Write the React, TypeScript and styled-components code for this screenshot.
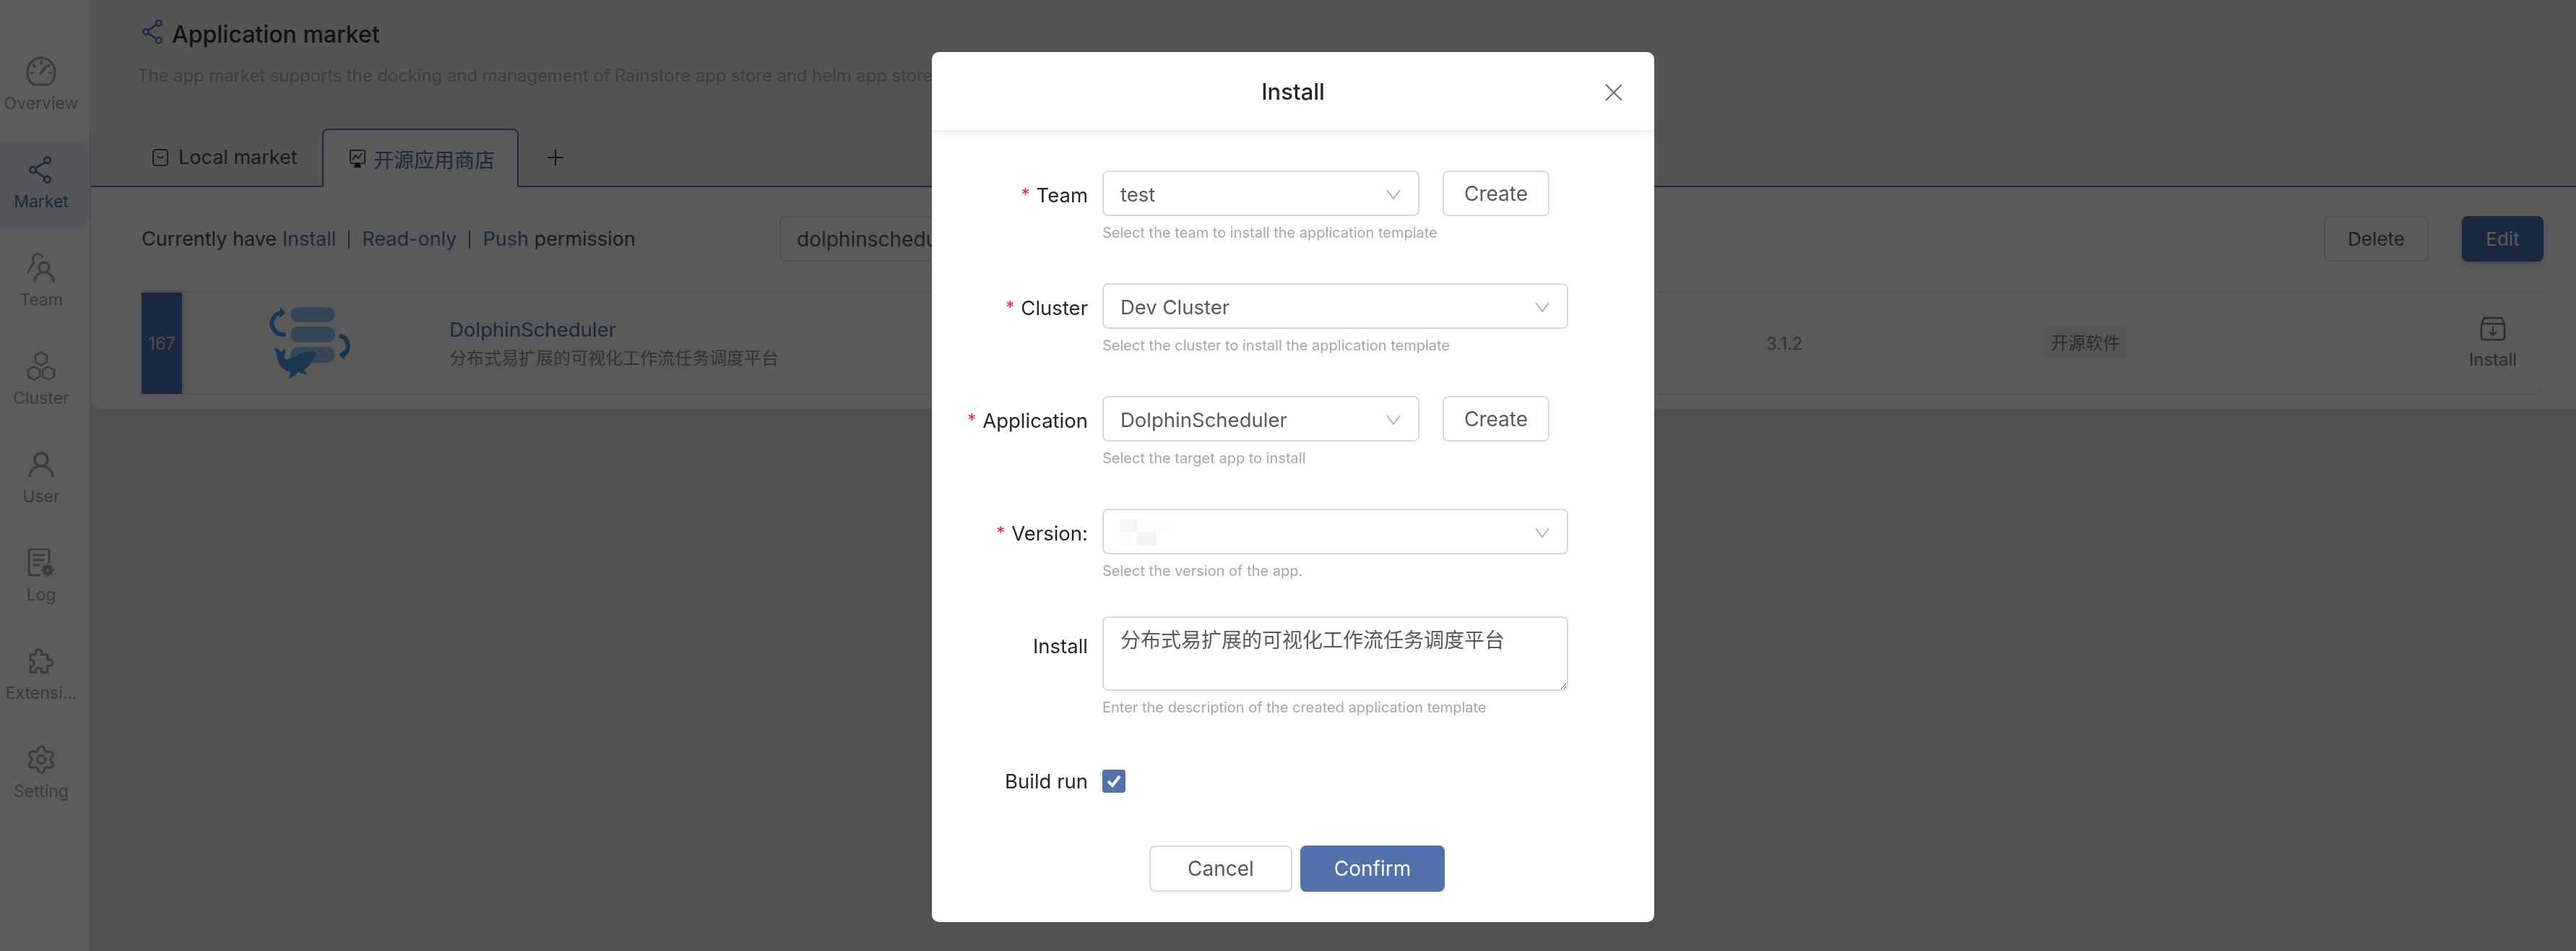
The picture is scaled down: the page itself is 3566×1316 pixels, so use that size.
import { ReactNode } from 'react';
import styled, { createGlobalStyle } from 'styled-components';
import { Settings } from 'lucide-react';

const FONT = `Inter, "Noto Sans CJK SC", "Noto Sans", sans-serif`;
const PRIMARY = '#4d73b1';

const GlobalStyle = createGlobalStyle`
	html, body {
		margin: 0;
		padding: 0;
		background: #dfe1e4;
		font-family: ${FONT};
	}
	* {
		box-sizing: border-box;
	}
`;

const Page = styled.div`
	display: flex;
	width: 3566px;
	height: 1316px;
	overflow: hidden;
	background: #dfe1e4;
`;

const Sidebar = styled.nav`
	display: flex;
	flex-direction: column;
	gap: 16px;
	flex: 0 0 124px;
	padding-top: 60px;
	background: #ffffff;
	box-shadow: 2px 0 6px rgba(0, 0, 0, 0.08);
`;

const NavItem = styled.div<{ $active?: boolean }>`
	display: flex;
	flex-direction: column;
	align-items: center;
	gap: 4px;
	height: 120px;
	padding: 15px 10px 0 0;
	border-radius: 0 16px 16px 0;
	background: ${(p) => (p.$active ? '#e9edf5' : 'transparent')};
	color: ${(p) => (p.$active ? PRIMARY : '#a3a3a3')};
`;

const NavIcon = styled.div`
	display: flex;
	align-items: center;
	justify-content: center;
	width: 48px;
	height: 48px;
	color: inherit;
`;

const NavLabel = styled.span`
	display: block;
	font-size: 23px;
	line-height: 32px;
	white-space: nowrap;
`;

const Main = styled.main`
	flex: 1;
	min-width: 0;
	display: flex;
	flex-direction: column;
`;

const Header = styled.header`
	height: 178px;
	padding: 26px 0 0 66px;
	background: #e8e9ec;
`;

const TitleRow = styled.div`
	display: flex;
	align-items: center;
	gap: 9px;
	height: 36px;
	margin-left: 5px;
	color: ${PRIMARY};
`;

const Title = styled.h1`
	margin: 8px 0 0;
	color: #333333;
	font-size: 32px;
	font-weight: 500;
	line-height: 36px;
`;

const Description = styled.p`
	margin: 27px 0 0;
	color: #a9a9a9;
	font-size: 24px;
	letter-spacing: -0.1px;
	line-height: 32px;
	white-space: nowrap;
`;

const TabBar = styled.div`
	display: flex;
	height: 81px;
	border-bottom: 2px solid ${PRIMARY};
	margin-left: 2px;
	background: #e8e9ec;
`;

const LocalTab = styled.div`
	display: flex;
	align-items: center;
	gap: 14px;
	width: 320px;
	padding-left: 85px;
	color: #4a4a4a;
	font-size: 27px;
`;

const ActiveTab = styled.div`
	display: flex;
	align-items: center;
	gap: 11px;
	width: 272px;
	height: 81px;
	padding-left: 36px;
	border: 2px solid ${PRIMARY};
	border-bottom: none;
	border-radius: 8px 8px 0 0;
	background: #f8f8f8;
	color: ${PRIMARY};
	font-size: 28px;
`;

const AddTab = styled.div`
	display: flex;
	align-items: center;
	margin-left: 39px;
	color: #333333;
`;

const Panel = styled.section`
	margin-left: 2px;
	padding: 40px 45px 20px 70px;
	border-radius: 0 0 0 16px;
	background: #f8f8f8;
`;

const Toolbar = styled.div`
	display: grid;
	grid-template-columns: 883px 560px 1fr auto auto;
	align-items: center;
	height: 63px;
	margin-bottom: 41px;
`;

const Permission = styled.div`
	display: flex;
	align-items: center;
	color: #4a4a4a;
	font-size: 27px;
	white-space: nowrap;
`;

const PermissionLink = styled.span`
	color: ${PRIMARY};
`;

const PermissionSep = styled.span`
	width: 2px;
	height: 26px;
	margin: 0 17px;
	background: ${PRIMARY};
`;

const SearchBox = styled.div`
	display: flex;
	align-items: center;
	height: 63px;
	padding-left: 22px;
	border: 2px solid #dedede;
	border-radius: 8px;
	color: #595959;
	font-size: 28px;
`;

const ToolbarButton = styled.div<{ $primary?: boolean }>`
	display: flex;
	align-items: center;
	justify-content: center;
	width: ${(p) => (p.$primary ? '113px' : '145px')};
	height: 63px;
	margin-left: ${(p) => (p.$primary ? '46px' : '0')};
	border: 2px solid ${(p) => (p.$primary ? PRIMARY : '#dedede')};
	border-radius: 8px;
	background: ${(p) => (p.$primary ? PRIMARY : 'transparent')};
	box-shadow: ${(p) => (p.$primary ? '0 4px 8px rgba(0, 0, 0, 0.15)' : 'none')};
	color: ${(p) => (p.$primary ? '#ffffff' : '#595959')};
	font-size: 26px;
`;

const AppCard = styled.article`
	display: grid;
	grid-template-columns: 54px 370px 1823px 384px 1fr 100px;
	align-items: center;
	height: 143px;
	padding-right: 18px;
	border: 2px solid #eaeaea;
	border-radius: 8px;
`;

const CountBlock = styled.div`
	display: flex;
	align-items: center;
	justify-content: center;
	width: 56px;
	height: 140px;
	margin-left: -2px;
	background: ${PRIMARY};
	box-shadow: 2px 0 6px rgba(0, 0, 0, 0.2);
	color: #d6d6d6;
	font-size: 24px;
`;

const LogoCell = styled.div`
	display: flex;
	align-items: center;
	height: 120px;
	margin-left: 120px;
	border-left: 1px solid #f0f0f0;
`;

const AppInfo = styled.div`
	display: flex;
	flex-direction: column;
	gap: 6px;
`;

const AppName = styled.span`
	color: ${PRIMARY};
	font-size: 27.5px;
	line-height: 36px;
`;

const AppDesc = styled.span`
	color: #8d8d8d;
	font-size: 24px;
	line-height: 32px;
`;

const Version = styled.span`
	color: #8d8d8d;
	font-size: 24px;
`;

const Tag = styled.span`
	justify-self: start;
	padding: 6px 10px;
	background: #efefef;
	color: #7a7a7a;
	font-size: 24px;
	line-height: 32px;
`;

const InstallAction = styled.div`
	display: flex;
	flex-direction: column;
	align-items: center;
	gap: 11px;
	color: #7a7a7a;
	font-size: 24px;
`;

const Overlay = styled.div`
	position: fixed;
	inset: 0;
	display: flex;
	align-items: flex-start;
	padding: 72px 0 0 1290px;
	background: rgba(0, 0, 0, 0.64);
`;

const Modal = styled.div`
	width: 1000px;
	height: 1204px;
	border-radius: 10px;
	background: #ffffff;
	overflow: hidden;
`;

const ModalHeader = styled.div`
	position: relative;
	display: flex;
	align-items: center;
	justify-content: center;
	height: 108px;
	box-shadow: 0 2px 8px rgba(0, 0, 0, 0.12);
	color: #262626;
	font-size: 31px;
	font-weight: 500;
`;

const CloseButton = styled.div`
	position: absolute;
	top: 44px;
	right: 44px;
	display: flex;
	color: #6f6f6f;
`;

const Form = styled.div`
	display: flex;
	flex-direction: column;
	gap: 55px;
	padding-top: 56px;
`;

const Row = styled.div<{ $pull?: number }>`
	display: grid;
	grid-template-columns: 216px 1fr;
	column-gap: 20px;
	margin-top: ${(p) => p.$pull ?? 0}px;
`;

const Label = styled.label<{ $offset?: number }>`
	display: flex;
	align-items: center;
	justify-content: flex-end;
	gap: 9px;
	height: 63px;
	margin-top: ${(p) => p.$offset ?? 2}px;
	color: #262626;
	font-size: 27.5px;
	white-space: nowrap;
`;

const Required = styled.span`
	color: #f5222d;
	font-size: 24px;
`;

const Control = styled.div`
	display: flex;
	align-items: center;
	gap: 32px;
`;

const Select = styled.div<{ $wide?: boolean }>`
	display: flex;
	align-items: center;
	justify-content: space-between;
	width: ${(p) => (p.$wide ? '645px' : '439px')};
	height: 63px;
	padding: 2px 24px 0 23px;
	border: 2px solid #d9d9d9;
	border-radius: 8px;
	color: #595959;
	font-size: 27.5px;
`;

const CreateButton = styled.div`
	display: flex;
	align-items: center;
	justify-content: center;
	width: 148px;
	height: 63px;
	border: 2px solid #d9d9d9;
	border-radius: 8px;
	box-shadow: 0 3px 0 rgba(0, 0, 0, 0.015);
	color: #595959;
	font-size: 28px;
`;

const Help = styled.div`
	margin-top: 8px;
	color: #a6a6a6;
	font-size: 20px;
	line-height: 30px;
`;

const TextArea = styled.textarea`
	display: block;
	width: 645px;
	height: 103px;
	padding: 14px 23px 6px;
	border: 2px solid #d9d9d9;
	border-radius: 8px;
	outline: none;
	color: #595959;
	font-family: ${FONT};
	font-size: 28px;
	line-height: 34px;
`;

const CheckCell = styled.div`
	display: flex;
	align-items: center;
	height: 63px;
`;

const Checkbox = styled.div`
	display: flex;
	align-items: center;
	justify-content: center;
	width: 32px;
	height: 32px;
	border-radius: 4px;
	background: #5371ab;
`;

const Footer = styled.div`
	display: flex;
	gap: 11px;
	margin-top: 58px;
	padding-left: 301px;
`;

const FooterButton = styled.div<{ $primary?: boolean }>`
	display: flex;
	align-items: center;
	justify-content: center;
	width: ${(p) => (p.$primary ? '200px' : '198px')};
	height: 64px;
	border: 2px solid ${(p) => (p.$primary ? '#5371ab' : '#d9d9d9')};
	border-radius: 8px;
	background: ${(p) => (p.$primary ? '#5371ab' : '#ffffff')};
	box-shadow: 0 3px 0 rgba(0, 0, 0, 0.03);
	color: ${(p) => (p.$primary ? '#ffffff' : '#595959')};
	font-size: 28px;
`;

function ShareIcon({ size = 36 }: { size?: number }): JSX.Element {
	return (
		<svg width={size} height={size} viewBox="0 0 36 40" fill="none" stroke="currentColor" strokeWidth="3">
			<circle cx="27" cy="6" r="4.5" />
			<circle cx="6" cy="20" r="4.5" />
			<circle cx="27" cy="34" r="4.5" />
			<path d="M10 17.5 L23 9 M10 22.5 L23 31" />
		</svg>
	);
}

function GaugeIcon(): JSX.Element {
	return (
		<svg width="42" height="42" viewBox="0 0 42 42" fill="none" stroke="currentColor" strokeWidth="3">
			<path d="M10 39 C4 35 2 28 2 22 C2 11 10 2 21 2 C32 2 40 11 40 22 C40 28 38 35 32 39 Z" strokeLinejoin="round" />
			<path d="M20 24 L27 15" strokeWidth="3.5" strokeLinecap="round" />
			<path d="M21 7 V10 M10 12 L12 14 M32 12 L30 14 M7 23 H10 M32 23 H35" strokeLinecap="round" />
		</svg>
	);
}

function TeamIcon(): JSX.Element {
	return (
		<svg width="38" height="42" viewBox="0 0 38 42" fill="none" stroke="currentColor" strokeWidth="3" strokeLinecap="round">
			<circle cx="23" cy="20" r="7" />
			<path d="M10 40 C10 33 15 27 23 27 C31 27 36 33 36 40" />
			<path d="M21 5 C19 2 14 0 10 3 C6 6 7 11 9 14 C6 17 3 22 1 27" />
		</svg>
	);
}

function ClusterIcon(): JSX.Element {
	return (
		<svg width="40" height="42" viewBox="0 0 40 42" fill="none" stroke="currentColor" strokeWidth="2.5" strokeLinejoin="round">
			<path d="M20 1.5 L28 6 V15 L20 19.5 L12 15 V6 Z" />
			<path d="M10 21.5 L18 26 V35 L10 39.5 L2 35 V26 Z" />
			<path d="M30 21.5 L38 26 V35 L30 39.5 L22 35 V26 Z" />
		</svg>
	);
}

function UserIcon(): JSX.Element {
	return (
		<svg width="36" height="36" viewBox="0 0 36 36" fill="none" stroke="currentColor" strokeWidth="3.5">
			<circle cx="18" cy="11" r="9" />
			<path d="M2 35 C2 26 9 20 18 20 C27 20 34 26 34 35" />
		</svg>
	);
}

function LogIcon(): JSX.Element {
	return (
		<svg width="38" height="40" viewBox="0 0 38 40" fill="none" stroke="currentColor" strokeWidth="3">
			<path d="M18 37 H5 Q2 37 2 34 V4 Q2 1 5 1 H27 Q30 1 30 4 V20" />
			<path d="M8 9 H24 M8 16 H24 M8 23 H17" />
			<circle cx="28" cy="30" r="4.5" strokeWidth="5" />
			<path d="M28 21 V24 M28 36 V39 M19 30 H22 M34 30 H37 M22 24 L24 26 M32 34 L34 36 M34 24 L32 26 M24 34 L22 36" strokeWidth="3" />
		</svg>
	);
}

function PuzzleIcon(): JSX.Element {
	return (
		<svg width="36" height="36" viewBox="0 0 35 34" fill="none" stroke="currentColor" strokeWidth="3" strokeLinejoin="round">
			<path d="M3 8 H10 C9 4 11 1 14 1 C17 1 19 4 18 8 H26 V15 C30 14 33 16 33 19 C33 22 30 24 26 23 V32 H18 C19 28 17 26 14 26 C11 26 9 28 10 32 H3 V24 C6 25 8 23 8 20 C8 17 6 15 3 16 Z" />
		</svg>
	);
}

function TabBagIcon(): JSX.Element {
	return (
		<svg width="22" height="24" viewBox="0 0 22 24" fill="none" stroke="#222" strokeWidth="1.5">
			<rect x="1" y="1" width="20" height="22" rx="4" />
			<path d="M7 10 C8 13 14 13 15 10" />
		</svg>
	);
}

function TabScreenIcon(): JSX.Element {
	return (
		<svg width="22" height="26" viewBox="0 0 22 26" fill="none" stroke="#222" strokeWidth="1.5">
			<rect x="1" y="1" width="20" height="18" rx="2" />
			<path d="M4 14 L8 8 L12 12 L17 5" />
			<path d="M7 24 H15 L13 19 H9 Z" fill="#222" />
		</svg>
	);
}

function ChevronDown(): JSX.Element {
	return (
		<svg width="20" height="14" viewBox="0 0 20 14" fill="none" stroke="#a8a8a8" strokeWidth="1.6">
			<path d="M1 1 L10 13 L19 1" />
		</svg>
	);
}

function CloseIcon(): JSX.Element {
	return (
		<svg width="24" height="24" viewBox="0 0 24 24" fill="none" stroke="currentColor" strokeWidth="2">
			<path d="M1 1 L23 23 M23 1 L1 23" />
		</svg>
	);
}

function PlusIcon(): JSX.Element {
	return (
		<svg width="24" height="24" viewBox="0 0 24 24" fill="none" stroke="currentColor" strokeWidth="2">
			<path d="M12 1 V23 M1 12 H23" />
		</svg>
	);
}

function BoxDownIcon(): JSX.Element {
	return (
		<svg width="36" height="34" viewBox="0 0 36 34" fill="none" stroke="currentColor" strokeWidth="2.5">
			<path d="M2 10 L6 2 H30 L34 10" />
			<rect x="2" y="10" width="32" height="22" rx="3" />
			<path d="M18 14 V26 M13 21 L18 26 L23 21" strokeWidth="2" />
		</svg>
	);
}

function CheckMark(): JSX.Element {
	return (
		<svg width="20" height="18" viewBox="0 0 20 18" fill="none" stroke="#fff" strokeWidth="4">
			<path d="M2 9 L8 15 L18 2" />
		</svg>
	);
}

function VersionPlaceholder(): JSX.Element {
	return (
		<svg width="72" height="36" viewBox="0 0 72 36">
			<path d="M24 0 H58 Q72 2 72 16 H24 Z" fill="#fcfcfc" />
			<rect x="0" y="0" width="24" height="17" fill="#f6f6f6" />
			<rect x="0" y="17" width="24" height="19" fill="#fcfcfc" />
			<rect x="24" y="17" width="26" height="19" fill="#f4f4f4" />
		</svg>
	);
}

function DolphinLogo(): JSX.Element {
	return (
		<svg width="118" height="100" viewBox="0 0 118 100" fill="none">
			<rect x="29" y="0" width="62" height="21" rx="10.5" fill="#92c6ee" />
			<rect x="29" y="27" width="62" height="22" rx="11" fill="#92c6ee" />
			<rect x="29" y="55" width="62" height="22" rx="11" fill="#92c6ee" />
			<path d="M20 38 A 15.4 15.4 0 0 1 14 8" stroke="#4a9ae4" strokeWidth="6" strokeLinecap="round" />
			<path d="M15 0 L22 8 L14 15 Z" fill="#4a9ae4" />
			<path d="M99 40 A 15 15 0 0 1 103 66" stroke="#4a9ae4" strokeWidth="6" strokeLinecap="round" />
			<path d="M96 66 L104 59 L104 73 Z" fill="#4a9ae4" />
			<path
				d="M6 56 C10 57 14 59 16 62 C18 60 20 58 22 57 C23 62 22 66 20 70 C24 74 28 70 38 66 C44 62 52 60 60 60 L66 64 C63 72 56 82 48 87 L53 94 L44 92 L40 90 C36 94 32 98 26 100 C27 96 29 92 29 90 C20 88 12 80 11 72 C10 66 8 60 6 56 Z"
				fill="#4a9ae4"
				stroke="#dbeaf6"
				strokeWidth="0.8"
			/>
		</svg>
	);
}

const NAV_ITEMS: { label: string; icon: ReactNode; active?: boolean }[] = [
	{ label: 'Overview', icon: <GaugeIcon /> },
	{ label: 'Market', icon: <ShareIcon size={38} />, active: true },
	{ label: 'Team', icon: <TeamIcon /> },
	{ label: 'Cluster', icon: <ClusterIcon /> },
	{ label: 'User', icon: <UserIcon /> },
	{ label: 'Log', icon: <LogIcon /> },
	{ label: 'Extensi...', icon: <PuzzleIcon /> },
	{ label: 'Setting', icon: <Settings size={44} strokeWidth={1.7} /> },
];

export default function App(): JSX.Element {
	return (
		<>
			<GlobalStyle />
			<Page>
				<Sidebar>
					{NAV_ITEMS.map((item) => (
						<NavItem key={item.label} $active={item.active}>
							<NavIcon>{item.icon}</NavIcon>
							<NavLabel>{item.label}</NavLabel>
						</NavItem>
					))}
				</Sidebar>
				<Main>
					<Header>
						<TitleRow>
							<ShareIcon size={34} />
							<Title>Application market</Title>
						</TitleRow>
						<Description>
							The app market supports the docking and management of Rainstore app store and helm app store
						</Description>
					</Header>
					<TabBar>
						<LocalTab>
							<TabBagIcon />
							Local market
						</LocalTab>
						<ActiveTab>
							<TabScreenIcon />
							开源应用商店
						</ActiveTab>
						<AddTab>
							<PlusIcon />
						</AddTab>
					</TabBar>
					<Panel>
						<Toolbar>
							<Permission>
								Currently have&nbsp;<PermissionLink>Install</PermissionLink>
								<PermissionSep />
								<PermissionLink>Read-only</PermissionLink>
								<PermissionSep />
								<PermissionLink>Push</PermissionLink>&nbsp;permission
							</Permission>
							<SearchBox>dolphinscheduler</SearchBox>
							<span />
							<ToolbarButton>Delete</ToolbarButton>
							<ToolbarButton $primary>Edit</ToolbarButton>
						</Toolbar>
						<AppCard>
							<CountBlock>167</CountBlock>
							<LogoCell>
								<DolphinLogo />
							</LogoCell>
							<AppInfo>
								<AppName>DolphinScheduler</AppName>
								<AppDesc>分布式易扩展的可视化工作流任务调度平台</AppDesc>
							</AppInfo>
							<Version>3.1.2</Version>
							<Tag>开源软件</Tag>
							<InstallAction>
								<BoxDownIcon />
								Install
							</InstallAction>
						</AppCard>
					</Panel>
				</Main>
			</Page>
			<Overlay>
				<Modal>
					<ModalHeader>
						Install
						<CloseButton>
							<CloseIcon />
						</CloseButton>
					</ModalHeader>
					<Form>
						<Row>
							<Label>
								<Required>*</Required>Team
							</Label>
							<div>
								<Control>
									<Select>
										test
										<ChevronDown />
									</Select>
									<CreateButton>Create</CreateButton>
								</Control>
								<Help>Select the team to install the application template</Help>
							</div>
						</Row>
						<Row>
							<Label>
								<Required>*</Required>Cluster
							</Label>
							<div>
								<Select $wide>
									Dev Cluster
									<ChevronDown />
								</Select>
								<Help>Select the cluster to install the application template</Help>
							</div>
						</Row>
						<Row>
							<Label>
								<Required>*</Required>Application
							</Label>
							<div>
								<Control>
									<Select>
										DolphinScheduler
										<ChevronDown />
									</Select>
									<CreateButton>Create</CreateButton>
								</Control>
								<Help>Select the target app to install</Help>
							</div>
						</Row>
						<Row>
							<Label>
								<Required>*</Required>Version:
							</Label>
							<div>
								<Select $wide>
									<VersionPlaceholder />
									<ChevronDown />
								</Select>
								<Help>Select the version of the app.</Help>
							</div>
						</Row>
						<Row $pull={-7}>
							<Label $offset={9}>Install</Label>
							<div>
								<TextArea readOnly defaultValue="分布式易扩展的可视化工作流任务调度平台" />
								<Help>Enter the description of the created application template</Help>
							</div>
						</Row>
						<Row>
							<Label $offset={0}>Build run</Label>
							<CheckCell>
								<Checkbox>
									<CheckMark />
								</Checkbox>
							</CheckCell>
						</Row>
					</Form>
					<Footer>
						<FooterButton>Cancel</FooterButton>
						<FooterButton $primary>Confirm</FooterButton>
					</Footer>
				</Modal>
			</Overlay>
		</>
	);
}
